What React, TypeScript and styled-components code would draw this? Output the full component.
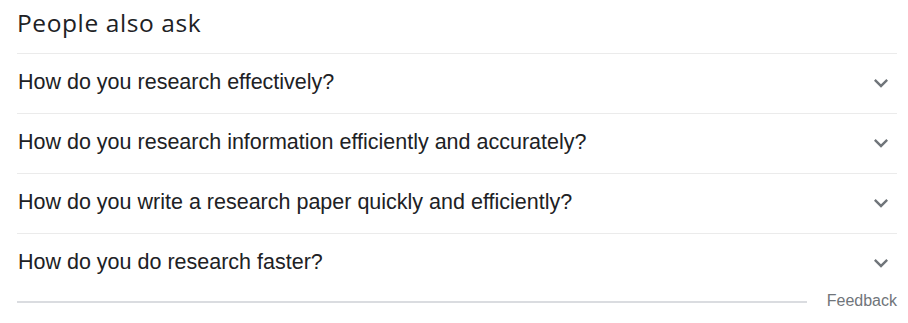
import React from "react";
import styled, { createGlobalStyle } from "styled-components";

const Global = createGlobalStyle`
  html, body { margin: 0; padding: 0; background: #fff; }
`;

const Wrap = styled.div`
  width: 880px;
  margin-left: 17px;
  font-family: "Liberation Sans", Arial, sans-serif;
`;

const Title = styled.div`
  height: 53px;
  box-sizing: border-box;
  padding-top: 7px;
  font-family: "Open Sans", Roboto, sans-serif;
  font-size: 24.5px;
  letter-spacing: 0.6px;
  line-height: 32px;
  color: #202124;
`;

const Row = styled.div`
  height: 60px;
  box-sizing: border-box;
  border-top: 1px solid #ebebeb;
  display: flex;
  align-items: center;
  justify-content: space-between;
  padding-bottom: 3px;
`;

const Question = styled.span`
  font-size: 21.5px;
  color: #202124;
  line-height: 28px;
  padding-left: 1px;
`;

const Chevron = styled.svg`
  width: 28px;
  height: 28px;
  fill: #70757a;
  margin-right: 2px;
  margin-top: 1px;
`;

const Footer = styled.div`
  display: flex;
  align-items: center;
  height: 16px;
`;

const FootLine = styled.div`
  flex: 1;
  height: 2px;
  background: #dadce0;
  margin-top: 1px;
`;

const Feedback = styled.span`
  margin-left: 20px;
  font-size: 16px;
  color: #70757a;
  line-height: 16px;
`;

const questions = [
  "How do you research effectively?",
  "How do you research information efficiently and accurately?",
  "How do you write a research paper quickly and efficiently?",
  "How do you do research faster?",
];

export default function App() {
  return (
    <Wrap>
      <Global />
      <Title>People also ask</Title>
      {questions.map((q) => (
        <Row key={q}>
          <Question>{q}</Question>
          <Chevron viewBox="0 0 24 24">
            <path d="M16.59 8.59L12 13.17 7.41 8.59 6 10l6 6 6-6z" />
          </Chevron>
        </Row>
      ))}
      <Footer>
        <FootLine />
        <Feedback>Feedback</Feedback>
      </Footer>
    </Wrap>
  );
}
